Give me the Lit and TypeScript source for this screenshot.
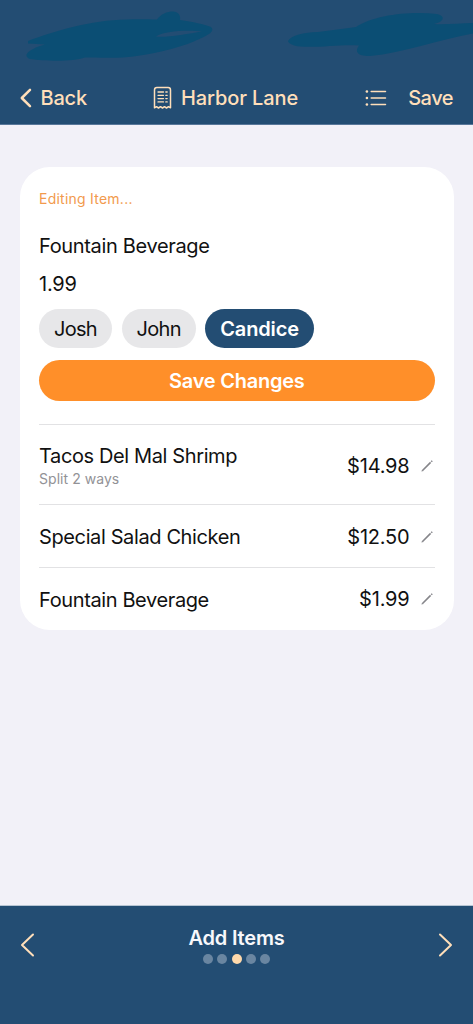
import { LitElement, css, html, nothing, svg } from "lit";
import { customElement, property, state } from "lit/decorators.js";

interface BillItem {
  name: string;
  price: number;
  splitBetween?: number;
}

@customElement("nav-header")
export class NavHeader extends LitElement {
  @property({ type: String }) heading = "";

  render() {
    return html`
      <svg class="waves" viewBox="0 0 473 70" aria-hidden="true">
        <path d="M28 41C55 31 90 20 127 19.500C140 19 149 19.500 157 19.500C161 14 167 11.500 173 11.500
          C178 12 181 15 180 20C193 22 204 24 211 27C216 32 206 36 195 41C176 49 151 55 123 57.500
          C107 58.500 97 57 85 57.500C73 62 44 61 30 59C23 56 26 50 45 44.500L28 43.500Z
          M156 36.500C164 38 188 34 202 31.500C189 29.500 162 31 156 36.500Z" fill-rule="evenodd"/>
        <path d="M288 41C291 35 304 32.500 318 32C331 30 344 29 356 27C374 15 410 11 437 14
          C446 16 444 22 434 24C445 25 460 23 473 23V33.500C441 39 403 53 370 56C356 56 355 51 359 45.500
          C343 44 317 48 300 46.500C293 46 288 43 288 41Z"/>
      </svg>
      <div class="bar">
        <a class="back">
          <svg width="12" height="20" viewBox="0 0 12 20">
            <path d="M10 1.800L1.800 10L10 18.200" stroke-width="2.500"/>
          </svg>
          <span class="back-label">Back</span>
        </a>
        <div class="title">
          <svg width="19" height="24" viewBox="0 0 19 24">
            <path d="M1.500 21.800V4Q1.500 1.600 3.900 1.600H15.100Q17.500 1.600 17.500 4V21.800L15.500 20.700L13.500 22L11.500 20.700L9.500 22L7.500 20.700L5.500 22L3.500 20.700Z" stroke-width="1.500"/>
            ${[6, 9.3, 12.6, 15.9].map(
              (y) => svg`<path d="M5 ${y}H10.500M12.800 ${y}H14.200" stroke-width="1.300"/>`,
            )}
          </svg>
          <span class="title-label">${this.heading}</span>
        </div>
        <div class="actions">
          <svg width="22" height="16" viewBox="0 0 22 16">
            ${[1.5, 8, 14.5].map(
              (y) => svg`<circle class="dot" cx="1.900" cy=${y} r="1.300"/>
                <path d="M6.200 ${y}H20.500" stroke-width="1.500"/>`,
            )}
          </svg>
          <span class="save-label">Save</span>
        </div>
      </div>
    `;
  }

  static styles = css`
    :host {
      position: relative;
      display: flex;
      flex-direction: column;
      justify-content: flex-end;
      box-sizing: border-box;
      height: 125px;
      background: var(--navy);
      border-bottom: 1px solid #58779a;
      color: var(--cream);
      font-weight: 550;
      font-size: 20px;
    }
    .waves {
      position: absolute;
      top: 0;
      left: 0;
      width: 473px;
      height: 70px;
      fill: #0b4e74;
    }
    .bar {
      display: grid;
      grid-template-columns: 1fr auto 1fr;
      align-items: center;
      height: 52px;
      padding: 0 20px 0 20px;
      white-space: nowrap;
    }
    .bar svg {
      fill: none;
      stroke: var(--cream);
      stroke-linecap: round;
      stroke-linejoin: round;
      flex: none;
    }
    .bar .dot {
      fill: var(--cream);
      stroke: none;
    }
    .back,
    .title,
    .actions {
      display: flex;
      align-items: center;
    }
    .back {
      gap: 8.5px;
      letter-spacing: -0.2px;
    }
    .title {
      gap: 9px;
      margin-right: 22px;
      letter-spacing: -0.1px;
    }
    .actions {
      justify-content: flex-end;
      gap: 21.5px;
    }
    .save-label {
      letter-spacing: -0.5px;
    }
  `;
}

@customElement("bill-row")
export class BillRow extends LitElement {
  @property({ attribute: false }) item!: BillItem;

  render() {
    const { name, price, splitBetween } = this.item;
    return html`
      <div class="info">
        <span class="name">${name}</span>
        ${splitBetween ? html`<span class="split">Split ${splitBetween} ways</span>` : nothing}
      </div>
      <span class="price">$${price.toFixed(2)}</span>
      <svg width="12" height="12" viewBox="0 0 12 12" aria-label="Edit">
        <path class="tip" d="M0.400 11.600L1.100 9.400L2.600 10.900Z"/>
        <path d="M1.800 10.200L9.600 2.400M10.300 1.700L11.200 0.800" />
      </svg>
    `;
  }

  static styles = css`
    :host {
      display: flex;
      align-items: center;
      padding-top: 2px;
      font-size: 20px;
      white-space: nowrap;
    }
    .info {
      display: flex;
      flex-direction: column;
      flex: 1;
      padding-top: 1px;
    }
    .name {
      line-height: 26px;
      letter-spacing: -0.38px;
    }
    .split {
      font-size: 14px;
      line-height: 19px;
      letter-spacing: 0.05px;
      margin-bottom: 2px;
      color: #929296;
    }
    .price {
      letter-spacing: -0.2px;
    }
    svg {
      margin: 0 2px 0 11px;
      stroke: #85858a;
      stroke-width: 1.6;
      fill: none;
    }
    .tip {
      fill: #85858a;
      stroke: none;
    }
  `;
}

@customElement("step-footer")
export class StepFooter extends LitElement {
  @property({ type: String }) label = "";
  @property({ type: Number }) steps = 5;
  @property({ type: Number }) current = 0;

  render() {
    return html`
      <svg width="15" height="24" viewBox="0 0 15 24"><path d="M13 1.500L2 12L13 22.500"/></svg>
      <div class="middle">
        <span class="label">${this.label}</span>
        <div class="dots">
          ${Array.from(
            { length: this.steps },
            (_, i) => html`<i class=${i === this.current ? "dot active" : "dot"}></i>`,
          )}
        </div>
      </div>
      <svg width="15" height="24" viewBox="0 0 15 24"><path d="M2 1.500L13 12L2 22.500"/></svg>
    `;
  }

  static styles = css`
    :host {
      display: flex;
      justify-content: space-between;
      align-items: flex-start;
      box-sizing: border-box;
      height: 119px;
      padding: 20px 20px 0;
      background: var(--navy);
      border-top: 1px solid #b7c5d3;
    }
    svg {
      margin-top: 7px;
      fill: none;
      stroke: var(--cream);
      stroke-width: 2;
      stroke-linecap: round;
      stroke-linejoin: round;
    }
    .middle {
      display: flex;
      flex-direction: column;
      align-items: center;
    }
    .label {
      font-size: 20px;
      font-weight: 600;
      line-height: 24px;
      letter-spacing: -0.2px;
      color: #f8f8fb;
    }
    .dots {
      display: flex;
      gap: 4.4px;
      margin-top: 4px;
    }
    .dot {
      width: 10px;
      height: 10px;
      border-radius: 50%;
      background: #6a86a1;
    }
    .active {
      background: #ffd9ab;
    }
  `;
}

@customElement("app-root")
export class AppRoot extends LitElement {
  @state() private selected = "Candice";

  private people = ["Josh", "John", "Candice"];

  private items: BillItem[] = [
    { name: "Tacos Del Mal Shrimp", price: 14.98, splitBetween: 2 },
    { name: "Special Salad Chicken", price: 12.5 },
    { name: "Fountain Beverage", price: 1.99 },
  ];

  render() {
    return html`
      <nav-header heading="Harbor Lane"></nav-header>
      <main>
        <section class="card">
          <div class="status">Editing Item...</div>
          <div class="field field-name">Fountain Beverage</div>
          <div class="field field-price">1.99</div>
          <div class="people">
            ${this.people.map(
              (p) => html`<button
                class=${p === this.selected ? "chip selected" : "chip"}
                @click=${() => (this.selected = p)}
              >${p}</button>`,
            )}
          </div>
          <button class="submit">Save Changes</button>
          ${this.items.map(
            (item) => html`<bill-row
              class=${item.splitBetween ? "row tall" : "row"}
              .item=${item}
            ></bill-row>`,
          )}
        </section>
      </main>
      <step-footer label="Add Items" steps="5" current="2"></step-footer>
    `;
  }

  static styles = css`
    :host {
      --navy: #234d73;
      --cream: #ffdfba;
      --orange: #ff8f29;
      display: flex;
      flex-direction: column;
      height: 100vh;
      overflow: hidden;
      background: #f2f1f8;
      color: #111;
      font-family: Inter, "Liberation Sans", sans-serif;
    }
    main {
      flex: 1;
      padding: 42px 19.5px 0 20px;
    }
    .card {
      display: flex;
      flex-direction: column;
      box-sizing: border-box;
      height: 463px;
      padding: 22px 19px 0;
      border-radius: 30px;
      background: #fff;
    }
    .status {
      font-size: 14px;
      line-height: 20px;
      letter-spacing: 0.24px;
      color: #f29a4d;
    }
    .field {
      font-size: 20px;
      line-height: 24px;
    }
    .field-name {
      margin-top: 25px;
      letter-spacing: -0.34px;
    }
    .field-price {
      margin-top: 14px;
      letter-spacing: -0.25px;
    }
    .people {
      display: flex;
      gap: 9.5px;
      margin-top: 13px;
    }
    button {
      border: 0;
      padding: 0;
      font: inherit;
      font-size: 20px;
    }
    .chip {
      height: 38.5px;
      padding: 1px 15px 0;
      border-radius: 20px;
      background: #e7e7e9;
      color: #111;
      letter-spacing: -0.7px;
    }
    .selected {
      background: var(--navy);
      color: #fff;
      font-weight: 600;
      letter-spacing: -0.15px;
    }
    .submit {
      height: 41px;
      margin: 12.5px 0 23px;
      border-radius: 21px;
      background: var(--orange);
      color: #fff;
      font-weight: 600;
      letter-spacing: -0.25px;
    }
    .row {
      box-sizing: border-box;
      height: 62.5px;
      border-top: 1px solid #e2e2e4;
    }
    .tall {
      height: 80px;
    }
  `;
}

declare global {
  interface HTMLElementTagNameMap {
    "nav-header": NavHeader;
    "bill-row": BillRow;
    "step-footer": StepFooter;
    "app-root": AppRoot;
  }
}
